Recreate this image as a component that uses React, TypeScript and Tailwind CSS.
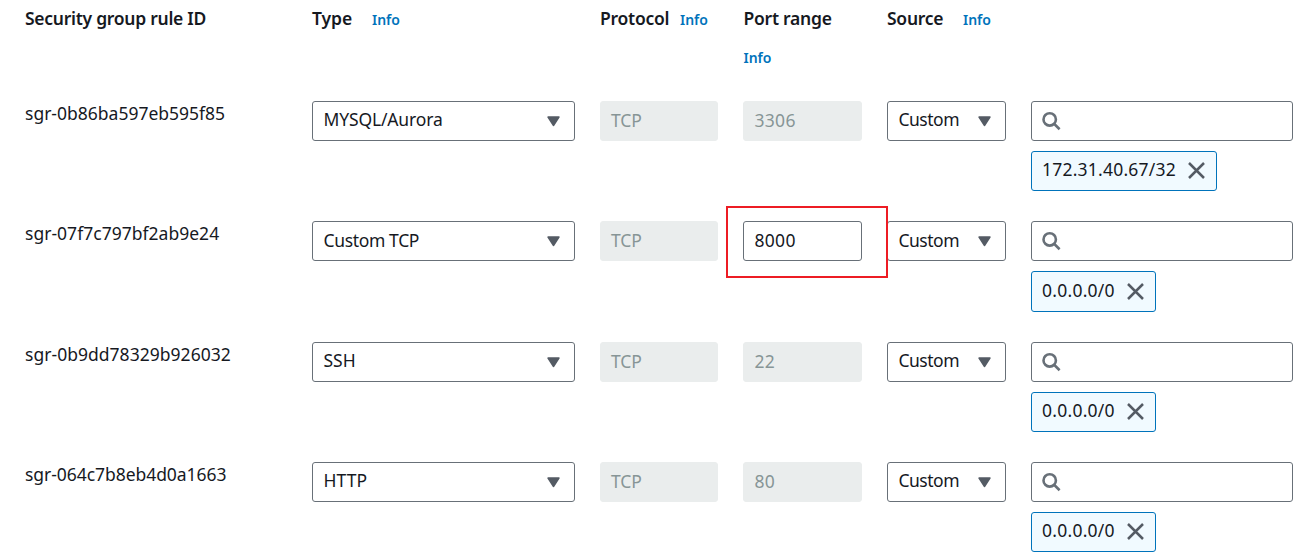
import type { ReactNode } from "react";

type Rule = {
  id: string;
  idTracking: string;
  type: string;
  typeTracking: string;
  port: string;
  editable?: boolean;
  cidr: string;
  cidrTracking: string;
  chipHeight: string;
  height: string;
};

const rules: Rule[] = [
  { id: "sgr-0b86ba597eb595f85", idTracking: "tracking-normal", type: "MYSQL/Aurora", typeTracking: "tracking-[-0.15px]", port: "3306", cidr: "172.31.40.67/32", cidrTracking: "tracking-[0.22px]", chipHeight: "h-10", height: "h-[120px]" },
  { id: "sgr-07f7c797bf2ab9e24", idTracking: "tracking-[0.02px]", type: "Custom TCP", typeTracking: "tracking-[-0.35px]", port: "8000", editable: true, cidr: "0.0.0.0/0", cidrTracking: "tracking-[0.25px]", chipHeight: "h-[41px]", height: "h-[121px]" },
  { id: "sgr-0b9dd78329b926032", idTracking: "tracking-[0.03px]", type: "SSH", typeTracking: "tracking-normal", port: "22", cidr: "0.0.0.0/0", cidrTracking: "tracking-[0.25px]", chipHeight: "h-10", height: "h-[120px]" },
  { id: "sgr-064c7b8eb4d0a1663", idTracking: "tracking-[-0.05px]", type: "HTTP", typeTracking: "tracking-[0.1px]", port: "80", cidr: "0.0.0.0/0", cidrTracking: "tracking-[0.25px]", chipHeight: "h-10", height: "h-[95px]" },
];

const columns = "grid grid-cols-[287px_288px_143px_144px_144px_262px] pl-[25px]";

function Info({ className = "" }: { className?: string }) {
  return <a className={`text-[14px] font-semibold leading-5 text-[#0073bb] ${className}`}>Info</a>;
}

function Select({ children, width, raised }: { children: ReactNode; width: string; raised: boolean }) {
  return (
    <div className={`flex h-10 items-center justify-between rounded-[3px] border border-[#687078] bg-white pl-[10.5px] pr-[14px] ${width}`}>
      <span className={raised ? "-mt-[4px]" : "-mt-[2px]"}>{children}</span>
      <svg width="13" height="11" viewBox="0 0 13 11" className="mt-px">
        <path d="M1 1H12L6.5 9.5Z" fill="#545b64" stroke="#545b64" strokeWidth="1.4" strokeLinejoin="round" />
      </svg>
    </div>
  );
}

function Field({ children, disabled, width }: { children: ReactNode; disabled?: boolean; width: string }) {
  return (
    <div
      className={`flex h-10 items-center rounded-[3px] border pl-[10px] ${width} ${
        disabled ? "border-[#eaeded] bg-[#eaeded] text-[#879596]" : "border-[#687078] bg-white"
      }`}
    >
      <span className="-mt-[2px]">{children}</span>
    </div>
  );
}

function RuleRow({ rule }: { rule: Rule }) {
  const raised = !rule.editable;
  return (
    <div className={`${columns} ${rule.height} items-start`}>
      <div className={`leading-6 ${rule.idTracking}`}>{rule.id}</div>
      <Select width="w-[263px]" raised={raised}>
        <span className={rule.typeTracking}>{rule.type}</span>
      </Select>
      <Field disabled width="w-[118px]">
        <span className="tracking-[-0.1px]">TCP</span>
      </Field>
      <div className="relative">
        <Field disabled={!rule.editable} width="w-[119px]">
          <span className="ml-[0.5px] tracking-[0.3px]">{rule.port}</span>
        </Field>
        {rule.editable && (
          <div className="absolute -left-[17px] -top-[15px] z-10 h-[72px] w-[162px] border-2 border-[#ed1c24]" />
        )}
      </div>
      <Select width="w-[119px]" raised={raised}>
        <span className="tracking-[-0.5px]">Custom</span>
      </Select>
      <div className="flex flex-col items-start gap-[10px]">
        <div className="flex h-10 w-[262px] items-center rounded-[3px] border border-[#687078] pl-[10px]">
          <svg width="20" height="20" viewBox="0 0 20 20" fill="none" stroke="#687078" strokeWidth="2.6">
            <circle cx="7.7" cy="8.4" r="6.2" />
            <path d="M12.1 12.8L17.6 18.2" />
          </svg>
        </div>
        <div className={`flex items-center gap-[12px] rounded-[3px] border border-[#0073bb] bg-[#f1faff] pl-[10px] pr-[11px] ${rule.chipHeight}`}>
          <span className={`-mt-[4px] ${rule.cidrTracking}`}>{rule.cidr}</span>
          <svg width="17" height="17" viewBox="0 0 17 17" stroke="#545b64" strokeWidth="2.5" className="-mt-px">
            <path d="M1 1L16 16M16 1L1 16" />
          </svg>
        </div>
      </div>
    </div>
  );
}

export default function App() {
  return (
    <div className="h-[557px] w-[1305px] overflow-hidden bg-white font-['Noto_Sans','Open_Sans',sans-serif] text-[17.5px] leading-6 text-[#16191f]">
      <div className={`${columns} h-[101px] pt-[6px] font-semibold`}>
        <div className="tracking-[-0.27px]">Security group rule ID</div>
        <div className="flex items-start">
          <span className="w-[60px] tracking-[-0.05px]">Type</span>
          <Info className="mt-[4px]" />
        </div>
        <div className="flex items-start">
          <span className="w-[80px] tracking-[-0.25px]">Protocol</span>
          <Info className="mt-[4px]" />
        </div>
        <div className="flex flex-col pl-[0.5px]">
          <span className="tracking-[-0.25px]">Port range</span>
          <Info className="mt-[18px]" />
        </div>
        <div className="flex items-start">
          <span className="w-[76px] tracking-[-0.25px]">Source</span>
          <Info className="mt-[4px]" />
        </div>
      </div>
      {rules.map((rule) => (
        <RuleRow key={rule.id} rule={rule} />
      ))}
    </div>
  );
}
